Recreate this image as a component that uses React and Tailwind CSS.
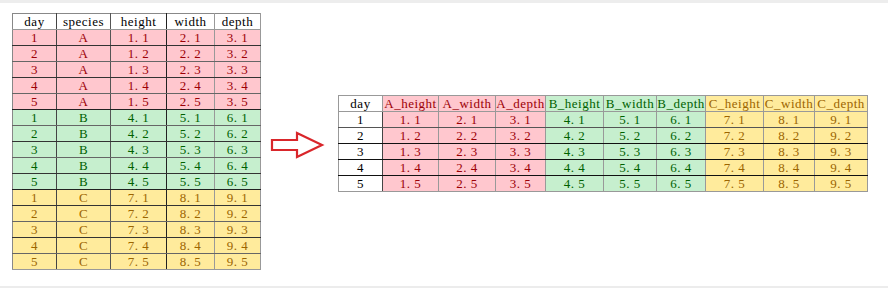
import React from 'react';

const groups = {
  A: { bg: 'bg-[#ffc7ce]', text: 'text-[#9c0006]', base: 1 },
  B: { bg: 'bg-[#c6efce]', text: 'text-[#006100]', base: 4 },
  C: { bg: 'bg-[#ffeb9c]', text: 'text-[#9c6500]', base: 7 },
};

const leftCols = ['w-[44px]', 'w-[54px]', 'w-[56px]', 'w-[48px]', 'w-[46px]'];
const leftRight = ['border-r-[#444]', 'border-r-[#555]', 'border-r-[#222]', 'border-r-[#999]', 'border-r-[#999]'];

const rightCols = [
  'w-[44px]', 'w-[56px]', 'w-[57px]', 'w-[50px]',
  'w-[58px]', 'w-[53px]', 'w-[49px]',
  'w-[58px]', 'w-[51px]', 'w-[53px]',
];

const cell = 'p-0 text-center align-middle whitespace-nowrap border border-solid';

const LeftTable = () => {
  const rows = [];
  ['A', 'B', 'C'].forEach((g) => {
    for (let d = 1; d <= 5; d++) {
      const b = groups[g].base;
      rows.push({ g, d, vals: [`${b}. ${d}`, `${b + 1}. ${d}`, `${b + 2}. ${d}`] });
    }
  });

  return (
    <table className="border-collapse table-fixed ml-[12px] mt-[10px] shrink-0">
      <colgroup>
        {leftCols.map((w, i) => <col key={i} className={w} />)}
      </colgroup>
      <thead>
        <tr className="h-[16px]">
          {['day', 'species', 'height', 'width', 'depth'].map((h, i) => (
            <th key={h} className={`${cell} font-normal text-black bg-white border-[#888] ${leftRight[i]} border-b-[#999]`}>{h}</th>
          ))}
        </tr>
      </thead>
      <tbody>
        {rows.map((r, idx) => {
          const { bg, text } = groups[r.g];
          const last = idx === rows.length - 1;
          const bottom = last ? 'border-b-[#999]' : idx % 5 === 4 ? 'border-b-[#222]' : idx % 2 === 0 ? 'border-b-[#333]' : 'border-b-[#666]';
          const values = [r.d, r.g, ...r.vals];
          return (
            <tr key={idx} className="h-[16px]">
              {values.map((v, i) => (
                <td key={i} className={`${cell} ${bg} ${text} border-[#999] ${leftRight[i]} ${bottom} ${i === 0 ? 'border-l-[#888]' : ''}`}>{v}</td>
              ))}
            </tr>
          );
        })}
      </tbody>
    </table>
  );
};

const RightTable = () => {
  const headers = [
    { t: 'day', g: null },
    { t: 'A_height', g: 'A' }, { t: 'A_width', g: 'A' }, { t: 'A_depth', g: 'A' },
    { t: 'B_height', g: 'B' }, { t: 'B_width', g: 'B' }, { t: 'B_depth', g: 'B' },
    { t: 'C_height', g: 'C' }, { t: 'C_width', g: 'C' }, { t: 'C_depth', g: 'C' },
  ];

  return (
    <table className="border-collapse table-fixed mt-[92px] ml-[12px] shrink-0">
      <colgroup>
        {rightCols.map((w, i) => <col key={i} className={w} />)}
      </colgroup>
      <thead>
        <tr className="h-[16px]">
          {headers.map((h) => {
            const c = h.g ? `${groups[h.g].bg} ${groups[h.g].text}` : 'bg-white text-black';
            return (
              <th key={h.t} className={`${cell} font-normal ${c} border-[#999]`}>{h.t}</th>
            );
          })}
        </tr>
      </thead>
      <tbody>
        {[1, 2, 3, 4, 5].map((d) => (
          <tr key={d} className="h-[16px]">
            {headers.map((h, i) => {
              const bottom = d === 5 ? 'border-b-[#999]' : d === 1 ? 'border-b-[#555]' : 'border-b-[#111]';
              if (!h.g) {
                return <td key={i} className={`${cell} bg-white text-black border-[#999] border-r-[#444] ${bottom}`}>{d}</td>;
              }
              const grp = groups[h.g];
              const k = (i - 1) % 3;
              return (
                <td key={i} className={`${cell} ${grp.bg} ${grp.text} border-[#999] ${bottom}`}>{`${grp.base + k}. ${d}`}</td>
              );
            })}
          </tr>
        ))}
      </tbody>
    </table>
  );
};

const Arrow = () => (
  <svg width="56" height="30" viewBox="0 0 56 30" className="mt-[128px] ml-[9px] shrink-0">
    <path
      d="M2 9 L27 9 L27 2 L52 14 L27 26 L27 19 L2 19 Z"
      fill="white"
      stroke="#d9262b"
      strokeWidth="2.2"
      strokeLinejoin="miter"
    />
  </svg>
);

export default function App() {
  return (
    <div
      className="w-[888px] h-[289px] bg-white border-t-[3px] border-[#ededed] overflow-hidden flex flex-col"
      style={{ fontFamily: '"Liberation Serif", "Noto Sans CJK SC", serif' }}
    >
      <div className="flex items-start text-[13px] leading-none tracking-[0.5px] flex-1">
        <LeftTable />
        <Arrow />
        <RightTable />
      </div>
      <div className="h-[2px] bg-[#ececec] mb-[1px]" />
    </div>
  );
}
